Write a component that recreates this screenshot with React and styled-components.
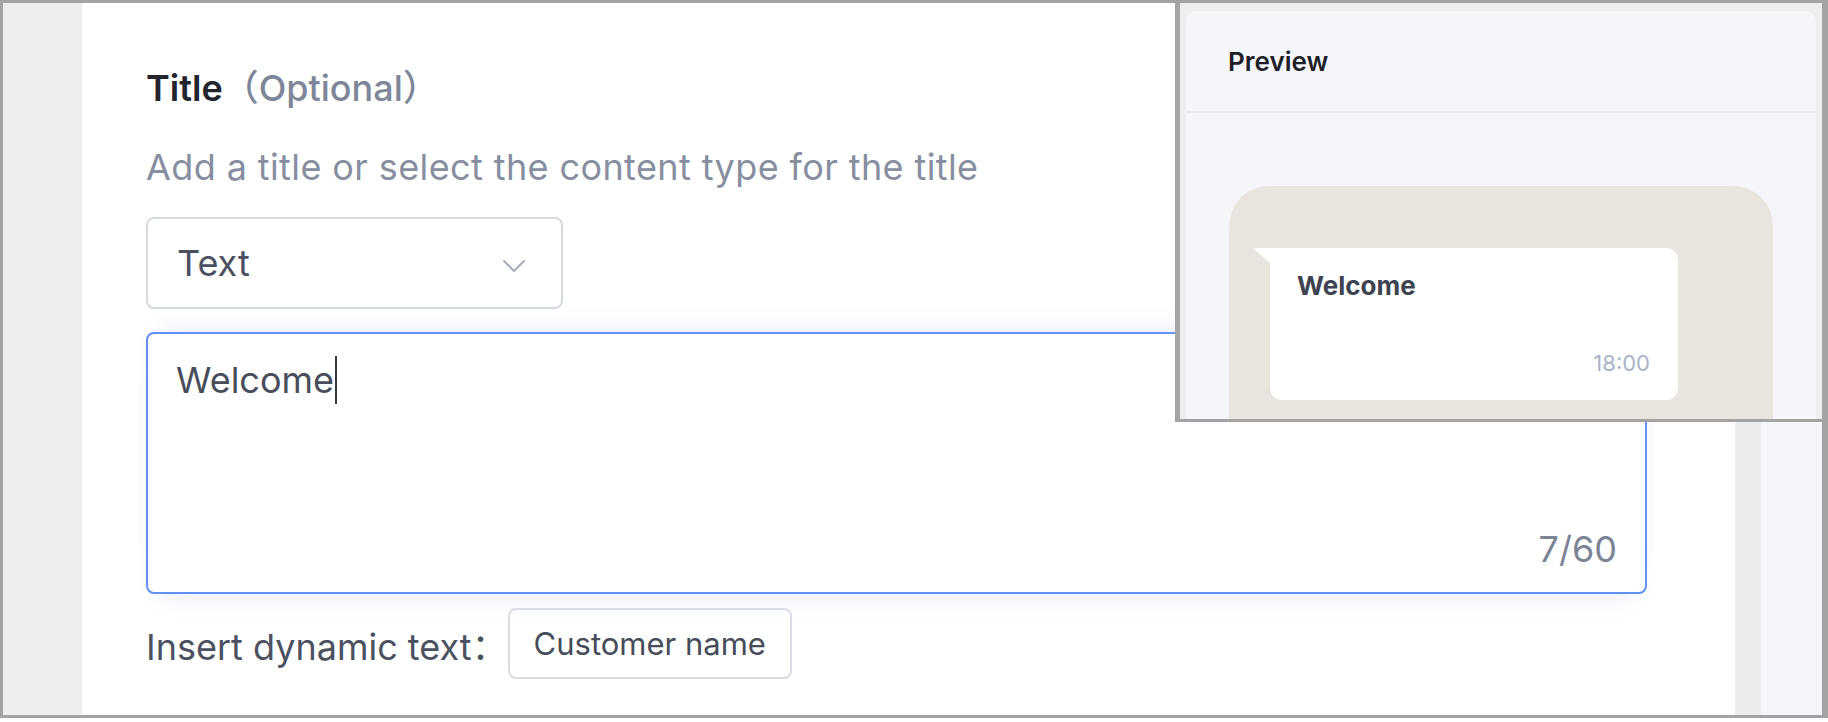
import React from 'react'
import styled, { createGlobalStyle } from 'styled-components'

const GlobalStyle = createGlobalStyle`
    * {
        box-sizing: border-box;
    }
    body {
        margin: 0;
        background-color: #ffffff;
        font-family: Inter, 'Noto Sans CJK SC', sans-serif;
    }
`

const App = () => {
  return (
    <Page>
        <GlobalStyle />
        <Frame>
            <SideRail />
            <Editor>
                <Title>
                    Title<Hint>（Optional）</Hint>
                </Title>
                <Description>{'Add a title or select the content type for the title'}</Description>
                <Select>
                    <span>{'Text'}</span>
                    <svg width='22' height='12' viewBox='0 0 22 12' fill='none'>
                        <polyline points='1,1 11,11 21,1' stroke='#a7adba' strokeWidth='2' strokeLinecap='round' strokeLinejoin='round' />
                    </svg>
                </Select>
                <Field>
                    <FieldText>
                        {'Welcome'}
                        <Caret />
                    </FieldText>
                    <Counter>{'7/60'}</Counter>
                </Field>
                <InsertRow>
                    <span>{'Insert dynamic text：'}</span>
                    <Chip>{'Customer name'}</Chip>
                </InsertRow>
            </Editor>
            <Gutter />
            <PanelEdge />
        </Frame>

        <PreviewWindow>
            <PreviewCard>
                <PreviewHeader>{'Preview'}</PreviewHeader>
                <PreviewBody>
                    <Chat>
                        <Bubble>
                            <BubbleTail />
                            <BubbleBody>
                                <BubbleTitle>{'Welcome'}</BubbleTitle>
                                <BubbleTime>{'18:00'}</BubbleTime>
                            </BubbleBody>
                        </Bubble>
                    </Chat>
                </PreviewBody>
            </PreviewCard>
        </PreviewWindow>
    </Page>
  )
}

export default App

const Page = styled.div`
    position: relative;
    width: 1828px;
    height: 722px;
    overflow: hidden;
`

const Frame = styled.div`
    display: flex;
    width: 1828px;
    height: 718px;
    border: 3px solid #a3a3a3;
    border-right-width: 6px;
`

const SideRail = styled.div`
    width: 79px;
    background-color: #edeef0;
`

const Editor = styled.div`
    width: 1653px;
    padding: 60px 0 0 64px;
    display: flex;
    flex-direction: column;
    align-items: flex-start;
    background-color: #ffffff;
`

const Title = styled.div`
    font-size: 36px;
    line-height: 50px;
    font-weight: 600;
    color: #22252d;
`

const Hint = styled.span`
    font-weight: 500;
    color: #7e8699;
`

const Description = styled.div`
    margin-top: 29px;
    font-size: 36px;
    line-height: 50px;
    letter-spacing: 0.4px;
    color: #878e9f;
`

const Select = styled.div`
    margin-top: 25px;
    width: 417px;
    height: 92px;
    padding: 0 36px 0 29px;
    display: flex;
    align-items: center;
    justify-content: space-between;
    border: 2px solid #d5d9e2;
    border-radius: 8px;
    font-size: 36px;
    color: #4a5060;

    svg {
        margin-top: 6px;
    }
`

const Field = styled.div`
    margin-top: 23px;
    width: 1501px;
    height: 262px;
    padding: 22px 28px 19px 28px;
    display: flex;
    flex-direction: column;
    justify-content: space-between;
    border: 2px solid #6291f6;
    border-radius: 8px;
    box-shadow: 0 18px 24px -16px rgba(90, 120, 240, 0.14), 0 -18px 24px -16px rgba(90, 120, 240, 0.14);
`

const FieldText = styled.div`
    display: flex;
    align-items: center;
    font-size: 36px;
    line-height: 48px;
    color: #474d5a;
`

const Caret = styled.span`
    width: 2px;
    height: 48px;
    margin-left: 1px;
    background-color: #343842;
`

const Counter = styled.div`
    align-self: flex-end;
    font-size: 36px;
    line-height: 48px;
    color: #7c8395;
`

const InsertRow = styled.div`
    margin-top: 14px;
    display: flex;
    align-items: center;
    font-size: 36px;
    color: #4b5160;
`

const Chip = styled.div`
    height: 71px;
    padding: 0 24px;
    display: flex;
    align-items: center;
    border: 2px solid #d9dce4;
    border-radius: 8px;
    font-size: 31px;
    color: #464c59;
`

const Gutter = styled.div`
    width: 26px;
    background-color: #ebecee;
`

const PanelEdge = styled.div`
    flex: 1;
    background-color: #f5f6f9;
`

/* floating preview window pinned over the top-right corner */
const PreviewWindow = styled.div`
    position: absolute;
    top: 0;
    left: 1175px;
    width: 653px;
    height: 422px;
    padding: 8px 6px 0 6px;
    border: 3px solid #a3a3a3;
    border-left-width: 5px;
    border-right-width: 6px;
    background-color: #eceef0;
    overflow: hidden;
`

const PreviewCard = styled.div`
    height: 100%;
    border-radius: 10px 10px 0 0;
    background-color: #f5f6f9;
    overflow: hidden;
`

const PreviewHeader = styled.div`
    height: 102px;
    padding-left: 42px;
    display: flex;
    align-items: center;
    border-bottom: 2px solid #e5e8ef;
    font-size: 26px;
    font-weight: 600;
    color: #1d2027;
`

const PreviewBody = styled.div`
    padding: 73px 43px 0 43px;
`

const Chat = styled.div`
    height: 300px;
    padding: 62px 0 0 24px;
    border-radius: 40px 40px 0 0;
    background-color: #e8e5de;
`

const Bubble = styled.div`
    display: flex;
`

const BubbleTail = styled.div`
    width: 17px;
    height: 15px;
    background-color: #ffffff;
    clip-path: polygon(0 0, 100% 0, 100% 100%);
`

const BubbleBody = styled.div`
    width: 408px;
    height: 152px;
    padding: 18px 28px 22px 27px;
    display: flex;
    flex-direction: column;
    justify-content: space-between;
    border-radius: 0 12px 12px 12px;
    background-color: #ffffff;
`

const BubbleTitle = styled.div`
    font-size: 26px;
    line-height: 40px;
    font-weight: 700;
    color: #3d4350;
`

const BubbleTime = styled.div`
    align-self: flex-end;
    font-size: 22px;
    line-height: 30px;
    color: #a9b3c9;
`
